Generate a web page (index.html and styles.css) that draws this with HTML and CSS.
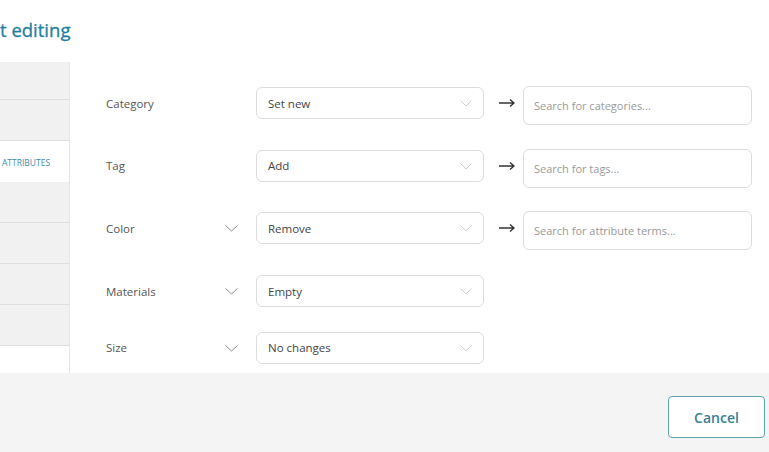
FILE: index.html
```html
<!DOCTYPE html>
<html>
<head>
<meta charset="utf-8">
<link rel="stylesheet" href="styles.css">
</head>
<body>
<div class="page">
  <div class="header"><h1 class="title">t editing</h1></div>
  <div class="content">
    <div class="sidebar">
      <div class="tab tab-first"></div>
      <div class="tab"></div>
      <div class="tab tab-active">ATTRIBUTES</div>
      <div class="tab"></div>
      <div class="tab"></div>
      <div class="tab"></div>
      <div class="tab"></div>
    </div>
    <div class="main">
      <div class="row">
        <div class="label"><span>Category</span></div>
        <div class="select"><span>Set new</span><svg class="sel-chev" width="12" height="7" viewBox="0 0 12 7"><polyline points="0.5,0.5 6,6 11.5,0.5" fill="none" stroke="#cfcfcf" stroke-width="1"/></svg></div>
        <div class="arrow"><svg width="16" height="10" viewBox="0 0 16 10"><path d="M0 5 H15 M11 1.5 L15 5 L11 8.5" fill="none" stroke="#333" stroke-width="1.5"/></svg></div>
        <div class="search">Search for categories...</div>
      </div>
      <div class="row">
        <div class="label"><span>Tag</span></div>
        <div class="select"><span>Add</span><svg class="sel-chev" width="12" height="7" viewBox="0 0 12 7"><polyline points="0.5,0.5 6,6 11.5,0.5" fill="none" stroke="#cfcfcf" stroke-width="1"/></svg></div>
        <div class="arrow"><svg width="16" height="10" viewBox="0 0 16 10"><path d="M0 5 H15 M11 1.5 L15 5 L11 8.5" fill="none" stroke="#333" stroke-width="1.5"/></svg></div>
        <div class="search">Search for tags...</div>
      </div>
      <div class="row">
        <div class="label"><span>Color</span><svg class="lab-chev" width="13" height="7" viewBox="0 0 13 7"><polyline points="0.5,0.5 6.5,6 12.5,0.5" fill="none" stroke="#8a8a8a" stroke-width="1"/></svg></div>
        <div class="select"><span>Remove</span><svg class="sel-chev" width="12" height="7" viewBox="0 0 12 7"><polyline points="0.5,0.5 6,6 11.5,0.5" fill="none" stroke="#cfcfcf" stroke-width="1"/></svg></div>
        <div class="arrow"><svg width="16" height="10" viewBox="0 0 16 10"><path d="M0 5 H15 M11 1.5 L15 5 L11 8.5" fill="none" stroke="#333" stroke-width="1.5"/></svg></div>
        <div class="search">Search for attribute terms...</div>
      </div>
      <div class="row">
        <div class="label"><span>Materials</span><svg class="lab-chev" width="13" height="7" viewBox="0 0 13 7"><polyline points="0.5,0.5 6.5,6 12.5,0.5" fill="none" stroke="#8a8a8a" stroke-width="1"/></svg></div>
        <div class="select"><span>Empty</span><svg class="sel-chev" width="12" height="7" viewBox="0 0 12 7"><polyline points="0.5,0.5 6,6 11.5,0.5" fill="none" stroke="#cfcfcf" stroke-width="1"/></svg></div>
      </div>
      <div class="row">
        <div class="label"><span>Size</span><svg class="lab-chev" width="13" height="7" viewBox="0 0 13 7"><polyline points="0.5,0.5 6.5,6 12.5,0.5" fill="none" stroke="#8a8a8a" stroke-width="1"/></svg></div>
        <div class="select"><span>No changes</span><svg class="sel-chev" width="12" height="7" viewBox="0 0 12 7"><polyline points="0.5,0.5 6,6 11.5,0.5" fill="none" stroke="#cfcfcf" stroke-width="1"/></svg></div>
      </div>
    </div>
  </div>
  <div class="footer">
    <button class="cancel">Cancel</button>
  </div>
</div>
</body>
</html>
```
FILE: styles.css
```css
* { box-sizing: border-box; }
html, body { margin: 0; padding: 0; }
body {
  width: 769px;
  height: 452px;
  overflow: hidden;
  background: #fff;
  font-family: "Open Sans", "Noto Sans", sans-serif;
  color: #444;
}
.page {
  display: flex;
  flex-direction: column;
  height: 452px;
}
.header {
  height: 62px;
  padding-top: 17px;
}
.title {
  margin: 0;
  font-size: 18.5px;
  font-weight: 400;
  color: #1f7f9e;
  line-height: 26px;
  -webkit-text-stroke: 0.3px #1f7f9e;
}
.content {
  display: flex;
  height: 311px;
}
.sidebar {
  width: 70px;
  border-right: 1px solid #e6e6e6;
  display: flex;
  flex-direction: column;
}
.tab {
  height: 41px;
  background: #f1f1f1;
  border-bottom: 1px solid #dedede;
}
.tab-first { height: 38px; }
.tab-active {
  background: #fff;
  border-bottom: none;
  height: 41px;
  font-size: 8.5px;
  color: #3c8ea7;
  display: flex;
  align-items: center;
  padding-left: 2px;
  padding-top: 1px;
}
.main {
  flex: 1;
  padding: 25px 0 0 36px;
  display: flex;
  flex-direction: column;
  gap: 24.7px;
}
.row {
  display: flex;
  align-items: flex-start;
}
.label {
  width: 150px;
  height: 32px;
  display: flex;
  align-items: center;
  justify-content: space-between;
  padding-right: 18px;
  font-size: 11.5px;
  color: #555;
}
.lab-chev { margin-top: 1px; }
.select {
  width: 228px;
  height: 32px;
  border: 1px solid #dcdcdc;
  border-radius: 6px;
  display: flex;
  align-items: center;
  justify-content: space-between;
  padding: 0 11px 0 11px;
  font-size: 11.5px;
  color: #444;
}
.sel-chev { margin-top: 1px; }
.arrow {
  width: 39px;
  height: 32px;
  display: flex;
  align-items: center;
  padding-left: 15px;
}
.search {
  width: 229px;
  height: 39px;
  margin-top: -1px;
  border: 1px solid #dcdcdc;
  border-radius: 6px;
  padding: 0 10px;
  display: flex;
  align-items: center;
  font-size: 11px;
  color: #9a9a9a;
}
.footer {
  flex: 1;
  background: #f4f4f4;
  display: flex;
  justify-content: flex-end;
  align-items: flex-start;
  padding: 23px 4px 0 0;
}
.cancel {
  width: 97px;
  height: 42px;
  border: 1.5px solid #5fa3b4;
  border-radius: 4px;
  background: #fff;
  font-family: "Open Sans", "Noto Sans", sans-serif;
  font-size: 14px;
  font-weight: 600;
  color: #3a7f93;
}
```
